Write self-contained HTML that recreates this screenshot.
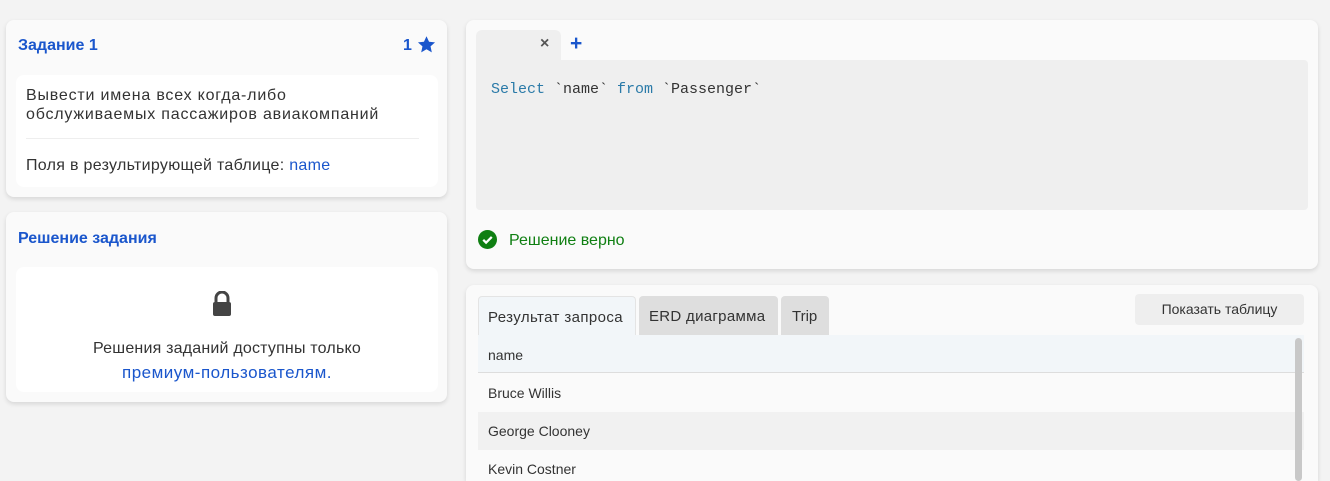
<!DOCTYPE html>
<html style="overflow:hidden;width:1330px;height:481px"><head><meta charset="utf-8"><style>
*{box-sizing:border-box;margin:0;padding:0}
body{width:1330px;height:481px;overflow:hidden;background:#f3f3f3;font-family:"Liberation Sans",sans-serif;color:#333;position:relative}
.card{position:absolute;background:#fafafa;border-radius:8px;box-shadow:0 2px 5px rgba(0,0,0,.12)}
.inner{position:absolute;background:#fff;border-radius:8px}
.blue{color:#1a56cc}
.abs{position:absolute;white-space:nowrap}
</style></head><body>
<div class="card" style="left:6px;top:20px;width:441px;height:177px">
 <div class="abs blue" style="left:12px;top:17px;font-size:16px;font-weight:bold">Задание 1</div>
 <div class="abs blue" style="left:397px;top:17px;font-size:16px;font-weight:bold">1</div>
 <svg class="abs" style="left:411px;top:15px" width="19" height="19" viewBox="0 0 24 24"><path fill="#1a56cc" d="M12 1.5l3.2 7 7.6.8-5.7 5.1 1.6 7.5L12 18l-6.7 3.9 1.6-7.5L1.2 9.3l7.6-.8z"/></svg>
 <div class="inner" style="left:10px;top:55px;width:422px;height:112px">
  <div class="abs" style="left:10px;top:11px;font-size:16px;line-height:19px;letter-spacing:0.8px">Вывести имена всех когда-либо<br>обслуживаемых пассажиров авиакомпаний</div>
  <div class="abs" style="left:10px;top:63px;width:393px;height:1px;background:#eee"></div>
  <div class="abs" style="left:10px;top:82px;font-size:16px;letter-spacing:0.3px">Поля в результирующей таблице: <span class="blue">name</span></div>
 </div>
</div>
<div class="card" style="left:6px;top:212px;width:441px;height:190px">
 <div class="abs blue" style="left:12px;top:18px;font-size:16px;font-weight:bold">Решение задания</div>
 <div class="inner" style="left:10px;top:55px;width:422px;height:125px">
  <svg class="abs" style="left:195px;top:24px" width="22" height="26" viewBox="0 0 22 26"><path d="M5 11V7a6 6 0 0 1 12 0v4" stroke="#444" stroke-width="3" fill="none"/><rect x="2" y="11" width="18" height="14" rx="2" fill="#444"/></svg>
  <div class="abs" style="left:0;width:422px;text-align:center;top:70px;font-size:16px;line-height:24px;letter-spacing:0.2px">Решения заданий доступны только<br><span class="blue" style="font-size:17px;letter-spacing:0.5px">премиум-пользователям.</span></div>
 </div>
</div>
<div class="card" style="left:466px;top:20px;width:852px;height:249px">
 <div class="abs" style="left:10px;top:10px;width:85px;height:32px;background:#efefef;border-radius:6px 6px 0 0"></div>
 <div class="abs" style="left:74px;top:15px;font-size:16px;font-weight:bold;color:#555">×</div>
 <div class="abs blue" style="left:104px;top:12px;font-size:21px;font-weight:bold">+</div>
 <div class="abs" style="left:10px;top:40px;width:832px;height:150px;background:#efefef;border-radius:0 4px 4px 4px"></div>
 <div class="abs" style="left:25px;top:61px;font-family:'Liberation Mono',monospace;font-size:15px;color:#333"><span style="color:#2a7aa8">Select</span> `name` <span style="color:#2a7aa8">from</span> `Passenger`</div>
 <svg class="abs" style="left:12px;top:210px" width="19" height="19" viewBox="0 0 20 20"><circle cx="10" cy="10" r="10" fill="#0f7f12"/><path d="M5.5 10.3l3 3 6-6" stroke="#fff" stroke-width="2.4" fill="none"/></svg>
 <div class="abs" style="left:43px;top:212px;font-size:16px;color:#0f7f12">Решение верно</div>
</div>
<div class="card" style="left:466px;top:285px;width:852px;height:196px;border-radius:8px 8px 0 0">
 <div class="abs" style="left:12px;top:11px;width:158px;height:40px;background:#f2f6f9;border:1px solid #e4e4e4;border-bottom:none;border-radius:4px 4px 0 0;font-size:15px;padding:12px 0 0 9px;letter-spacing:0.4px">Результат запроса</div>
 <div class="abs" style="left:173px;top:11px;width:139px;height:40px;background:#dedede;border-radius:4px 4px 0 0;font-size:15px;padding:12px 0 0 10px;letter-spacing:0.3px">ERD диаграмма</div>
 <div class="abs" style="left:315px;top:11px;width:48px;height:40px;background:#dedede;border-radius:4px 4px 0 0;font-size:15px;padding:12px 0 0 11px">Trip</div>
 <div class="abs" style="left:669px;top:9px;width:169px;height:31px;background:#eee;border-radius:4px;font-size:14px;text-align:center;line-height:31px">Показать таблицу</div>
 <div class="abs" style="left:12px;top:50px;width:826px;height:38px;background:#f2f6f9;border-bottom:1px solid #ddd;font-size:14px;padding:12px 10px">name</div>
 <div class="abs" style="left:12px;top:89px;width:826px;height:38px;background:#fafafa;font-size:14px;padding:11px 10px">Bruce Willis</div>
 <div class="abs" style="left:12px;top:127px;width:826px;height:38px;background:#f1f1f1;font-size:14px;padding:11px 10px">George Clooney</div>
 <div class="abs" style="left:12px;top:165px;width:826px;height:38px;background:#fafafa;font-size:14px;padding:11px 10px">Kevin Costner</div>
 <div class="abs" style="left:829px;top:53px;width:7px;height:143px;background:#c8c8c8;border-radius:4px"></div>
</div>
</body></html>
